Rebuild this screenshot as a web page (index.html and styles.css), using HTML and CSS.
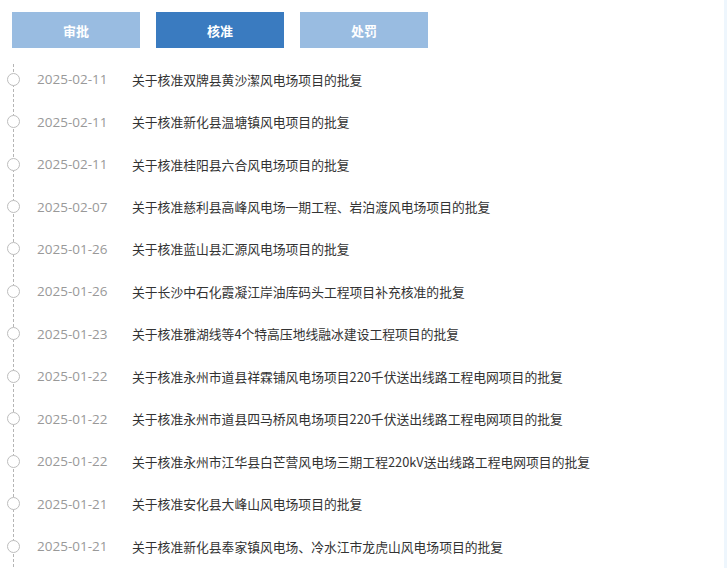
FILE: index.html
```html
<!DOCTYPE html>
<html lang="zh-CN">
<head>
<meta charset="utf-8">
<title>核准</title>
<link rel="stylesheet" href="styles.css">
</head>
<body>
<div class="page">
  <main class="main">
    <nav class="tabs">
      <a class="tab">审批</a>
      <a class="tab active">核准</a>
      <a class="tab">处罚</a>
    </nav>
    <ul class="timeline">
      <li class="item"><span class="dot"></span><span class="date">2025-02-11</span><span class="title">关于核准双牌县黄沙潔风电场项目的批复</span></li>
      <li class="item"><span class="dot"></span><span class="date">2025-02-11</span><span class="title">关于核准新化县温塘镇风电项目的批复</span></li>
      <li class="item"><span class="dot"></span><span class="date">2025-02-11</span><span class="title">关于核准桂阳县六合风电场项目的批复</span></li>
      <li class="item"><span class="dot"></span><span class="date">2025-02-07</span><span class="title">关于核准慈利县高峰风电场一期工程、岩泊渡风电场项目的批复</span></li>
      <li class="item"><span class="dot"></span><span class="date">2025-01-26</span><span class="title">关于核准蓝山县汇源风电场项目的批复</span></li>
      <li class="item"><span class="dot"></span><span class="date">2025-01-26</span><span class="title">关于长沙中石化霞凝江岸油库码头工程项目补充核准的批复</span></li>
      <li class="item"><span class="dot"></span><span class="date">2025-01-23</span><span class="title">关于核准雅湖线等4个特高压地线融冰建设工程项目的批复</span></li>
      <li class="item"><span class="dot"></span><span class="date">2025-01-22</span><span class="title">关于核准永州市道县祥霖铺风电场项目220千伏送出线路工程电网项目的批复</span></li>
      <li class="item"><span class="dot"></span><span class="date">2025-01-22</span><span class="title">关于核准永州市道县四马桥风电场项目220千伏送出线路工程电网项目的批复</span></li>
      <li class="item"><span class="dot"></span><span class="date">2025-01-22</span><span class="title">关于核准永州市江华县白芒营风电场三期工程220kV送出线路工程电网项目的批复</span></li>
      <li class="item"><span class="dot"></span><span class="date">2025-01-21</span><span class="title">关于核准安化县大峰山风电场项目的批复</span></li>
      <li class="item"><span class="dot"></span><span class="date">2025-01-21</span><span class="title">关于核准新化县奉家镇风电场、冷水江市龙虎山风电场项目的批复</span></li>
    </ul>
  </main>
  <div class="edge"></div>
</div>
</body>
</html>
```

FILE: styles.css
```css
html, body {
  margin: 0;
  padding: 0;
  background: #ffffff;
  height: 100%;
  overflow: hidden;
}
body {
  font-family: "Noto Sans CJK SC", "Noto Sans", sans-serif;
  font-size: 13px;
  color: #333333;
}
.page {
  display: flex;
  height: 568px;
}
.main {
  flex: 1;
  min-width: 0;
}
.edge {
  width: 3px;
  background: #eef6fd;
}
.tabs {
  display: flex;
  gap: 16px;
  padding: 12px 12px 0 12px;
}
.tab {
  width: 128px;
  height: 36px;
  display: flex;
  align-items: center;
  justify-content: center;
  background: #99bce1;
  color: #ffffff;
  font-size: 13px;
  font-weight: bold;
  cursor: pointer;
}
.tab.active {
  background: #3a7bc0;
}
.timeline {
  list-style: none;
  margin: 10px 0 0 0;
  padding: 0;
  position: relative;
}
.timeline::before {
  content: "";
  position: absolute;
  left: 13px;
  top: 6px;
  bottom: 0;
  border-left: 1px dashed #b5b5b5;
}
.item {
  height: 42.45px;
  display: flex;
  align-items: center;
  position: relative;
}
.dot {
  width: 11px;
  height: 11px;
  border: 1px solid #bdbdbd;
  border-radius: 50%;
  background: #ffffff;
  margin-left: 7px;
  flex: none;
  position: relative;
  z-index: 1;
}
.date {
  margin-left: 17px;
  width: 95px;
  flex: none;
  color: #999999;
  font-family: "Open Sans", "Noto Sans", sans-serif;
  font-size: 13.5px;
}
.title {
  color: #333333;
  font-size: 12.8px;
  white-space: nowrap;
}
```
